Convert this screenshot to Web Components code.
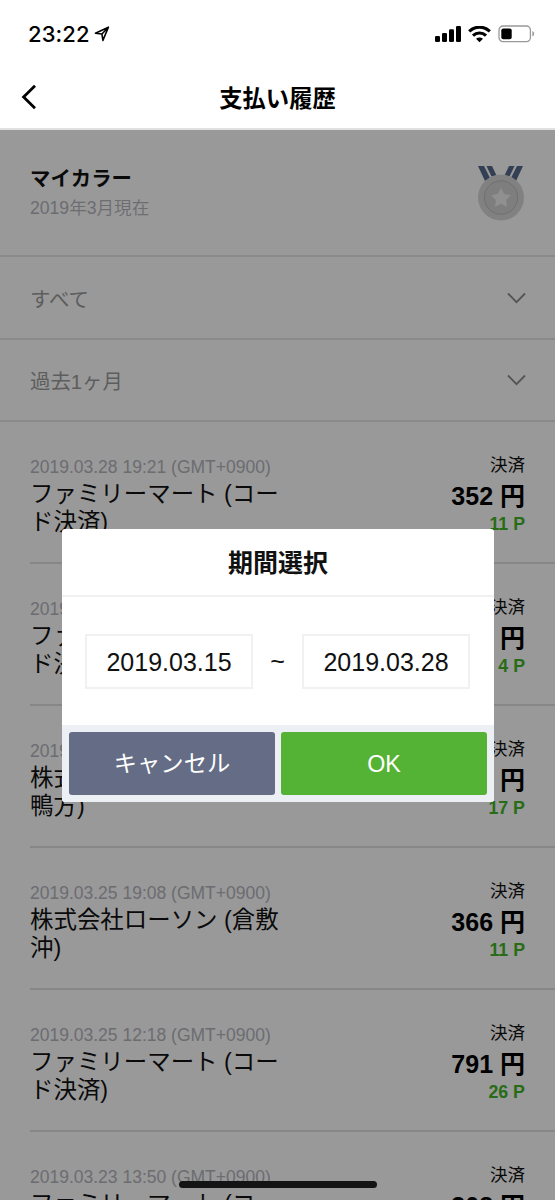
<!DOCTYPE html>
<html lang="ja">
<head>
<meta charset="utf-8">
<title>支払い履歴</title>
<style>
  body {
    margin: 0;
    background: #fff;
    font-family: "Liberation Sans", "Noto Sans CJK JP", sans-serif;
    color: #111;
  }
</style>
</head>
<body>
<history-app></history-app>

<script>
// Attaches an open shadow root and fills it with the markup of getTemplate()
class BaseElement extends HTMLElement {
  constructor() {
    super();
    this.attachShadow({ mode: 'open' });
  }

  connectedCallback() {
    const template = document.createElement('template');
    template.innerHTML = this.getTemplate();
    this.shadowRoot.replaceChildren(template.content.cloneNode(true));
  }
}

class StatusBar extends BaseElement {
  getTemplate() {
    return `
    <style>
      :host { display: flex; align-items: center; height: 68px; padding: 0 20px 0 28px; box-sizing: border-box; color: #000; }
      .time { font: 500 22px/28px Inter, "Liberation Sans", sans-serif; letter-spacing: 0.1px; }
      .location { margin: 0 auto 0 4px; }
      .battery { margin-left: 7px; }
      .wifi { margin-left: 7px; }
      svg { display: block; }
    </style>
    <span class="time">23:22</span>
    <svg class="location" width="16" height="16" viewBox="0 0 16 16">
      <path d="M14.4 1.2 8.9 14.4 7.9 8 1.4 7.2Z M14.4 1.2 7.9 8" fill="none" stroke="#000" stroke-width="1.6" stroke-linejoin="round"/>
    </svg>
    <svg width="26" height="17" viewBox="0 0 26 17">
      <rect x="0" y="10" width="5" height="6" rx="1.3"/>
      <rect x="7" y="7" width="5" height="9" rx="1.3"/>
      <rect x="14" y="3.2" width="5" height="12.8" rx="1.3"/>
      <rect x="21" y="0" width="5" height="16" rx="1.3"/>
    </svg>
    <svg class="wifi" width="23" height="17" viewBox="0 0 23 17">
      <g fill="none" stroke="#000" stroke-width="3.1">
        <path d="M1.2 5.4a14.6 14.6 0 0 1 20.6 0"/>
        <path d="M5 9.7a9.3 9.3 0 0 1 13 0"/>
      </g>
      <path d="M8 12.7q3.5-2.5 7 0l-3.5 3.5z"/>
    </svg>
    <svg class="battery" width="37" height="18" viewBox="0 0 37 18">
      <rect x="1" y="1" width="31.4" height="15.6" rx="4" fill="none" stroke="#999" stroke-width="1.3"/>
      <rect x="3.3" y="3.4" width="10.4" height="10.8" rx="2"/>
      <path d="M34.4 6v5.6q1.8-.8 1.8-2.8t-1.8-2.8z" fill="#999"/>
    </svg>
    `;
  }
}

class NavBar extends BaseElement {
  getTemplate() {
    return `
    <style>
      :host { display: flex; align-items: center; height: 62px; box-sizing: border-box; padding: 0 20px 2px; border-bottom: 2px solid #e1e1e1; }
      svg { display: block; width: 20px; height: 26px; }
      h1 { flex: 1; margin: 3px 20px 0 0; text-align: center; font-size: 23.3px; line-height: 30px; font-weight: 700; color: #000; }
    </style>
    <svg viewBox="0 0 20 26"><path d="M15 1.8 3.6 13 15 24.2" fill="none" stroke="#000" stroke-width="2.8"/></svg>
    <h1><slot></slot></h1>
    `;
  }
}

class MyColor extends BaseElement {
  getTemplate() {
    return `
    <style>
      :host { display: flex; justify-content: space-between; height: 127px; padding: 35px 30px 0; box-sizing: border-box; border-bottom: 2px solid #e6e6ea; }
      h2 { margin: 0; font-size: 20.4px; line-height: 28px; font-weight: 700; color: #111; }
      p { margin: 0; font-size: 17.6px; line-height: 30px; font-weight: 350; color: #b4b5bd; }
      svg { display: block; }
    </style>
    <div>
      <h2><slot></slot></h2>
      <p><slot name="date"></slot></p>
    </div>
    <svg width="48" height="56" viewBox="0 0 48 56">
      <g fill="#566a8c">
        <path d="M1 1h6l6 12-5 3z"/>
        <path d="M9.5 1H15l4.5 9.5-5 1z"/>
        <path d="M46 1h-6l-6 12 5 3z"/>
        <path d="M37.5 1H32l-4.5 9.5 5 1z"/>
      </g>
      <circle cx="24" cy="32.5" r="23" fill="#d8d8d8"/>
      <circle cx="24" cy="32.5" r="16.7" fill="#d3d3d3" stroke="#b9b9b9" stroke-width="1"/>
      <path d="m24 23 3.1 6.1 6.8 1.1-4.9 4.8 1.1 6.9-6.1-3.2-6.1 3.2 1.1-6.9-4.9-4.8 6.8-1.1z" fill="#f0f0f0"/>
    </svg>
    `;
  }
}

class FilterSelect extends BaseElement {
  getTemplate() {
    return `
    <style>
      :host { display: flex; align-items: center; justify-content: space-between; height: 82.5px; padding: 1px 29px 0 30px; box-sizing: border-box; border-bottom: 2px solid #e6e6ea; font-size: 20.4px; color: #9c9c9c; }
      svg { display: block; }
    </style>
    <span><slot></slot></span>
    <svg width="19" height="12" viewBox="0 0 19 12"><path d="m1 1.5 8.5 8.7L18 1.5" fill="none" stroke="#8c8c8c" stroke-width="1.8"/></svg>
    `;
  }
}

class PaymentItem extends BaseElement {
  getTemplate() {
    return `
    <style>
      :host { display: flex; justify-content: space-between; height: 142px; margin-left: 30px; padding: 32px 30px 0 0; box-sizing: border-box; border-bottom: 2px solid #e1e1e5; white-space: nowrap; }
      .date { margin-top: 1px; font-size: 17.5px; line-height: 24px; color: #b4b5bd; }
      .name { margin-top: 1px; font-size: 23.45px; line-height: 28px; white-space: pre-line; }
      .right { display: flex; flex-direction: column; align-items: flex-end; margin-top: -1px; }
      .kind { font-size: 17.5px; line-height: 24px; }
      .amount { margin-top: 3px; font-size: 25px; line-height: 32px; font-weight: 700; color: #000; }
      .points { margin-top: 1px; font-size: 17.8px; line-height: 23px; font-weight: 700; color: #45b527; }
    </style>
    <div>
      <div class="date">${this.getAttribute('date')}</div>
      <div class="name"><slot></slot></div>
    </div>
    <div class="right">
      <div class="kind">決済</div>
      <div class="amount">${this.getAttribute('amount')}</div>
      <div class="points">${this.getAttribute('points')}</div>
    </div>
    `;
  }
}

class DateField extends BaseElement {
  getTemplate() {
    return `
    <style>
      :host { display: flex; align-items: center; justify-content: center; width: 168px; height: 55px; padding-top: 2px; box-sizing: border-box; border: 2px solid #f1f1f1; font-size: 25px; color: #111; }
    </style>
    <slot></slot>
    `;
  }
}

class DialogButton extends BaseElement {
  getTemplate() {
    return `
    <style>
      :host { display: flex; flex: 1; align-items: center; justify-content: center; border-radius: 3px; background: #656c85; color: #fff; font-size: 23.3px; line-height: 30px; }
      :host([primary]) { background: #54b235; }
    </style>
    <slot></slot>
    `;
  }
}

class PeriodDialog extends BaseElement {
  getTemplate() {
    return `
    <style>
      :host { display: flex; flex-direction: column; width: 432px; height: 273px; border-radius: 3px; overflow: hidden; background: #fff; }
      h2 { margin: 0; height: 68px; box-sizing: border-box; padding-top: 1px; border-bottom: 2px solid #f1f1f2; text-align: center; font-size: 25px; line-height: 66px; font-weight: 700; }
      .range { display: flex; flex: 1; align-items: center; justify-content: space-between; padding: 0 24px 0 23px; font-size: 25px; }
      .buttons { display: flex; gap: 6px; height: 77px; box-sizing: border-box; padding: 7px; background: #eceff4; }
    </style>
    <h2><slot name="title"></slot></h2>
    <div class="range">
      <date-field>${this.getAttribute('from')}</date-field>
      <span>~</span>
      <date-field>${this.getAttribute('to')}</date-field>
    </div>
    <div class="buttons">
      <dialog-button>キャンセル</dialog-button>
      <dialog-button primary>OK</dialog-button>
    </div>
    `;
  }
}

const payments = [
  { date: '2019.03.28 19:21 (GMT+0900)', name: 'ファミリーマート (コー\nド決済)', amount: '352 円', points: '11 P' },
  { date: '2019', name: 'ファ\nド決', amount: '円', points: '4 P' },
  { date: '2019', name: '株式\n鴨方)', amount: '円', points: '17 P' },
  { date: '2019.03.25 19:08 (GMT+0900)', name: '株式会社ローソン (倉敷\n沖)', amount: '366 円', points: '11 P' },
  { date: '2019.03.25 12:18 (GMT+0900)', name: 'ファミリーマート (コー\nド決済)', amount: '791 円', points: '26 P' },
  { date: '2019.03.23 13:50 (GMT+0900)', name: 'ファミリーマート (コー', amount: '308 円', points: '' }
];

class HistoryApp extends BaseElement {
  getTemplate() {
    return `
    <style>
      :host { display: block; position: relative; width: 555px; height: 1200px; overflow: hidden; background: #fff; }
      .backdrop { position: absolute; inset: 130px 0 0; background: rgba(0, 0, 0, 0.4); }
      period-dialog { position: absolute; left: 62px; top: 529px; }
      .home { position: absolute; left: 179px; bottom: 12px; width: 198px; height: 7px; border-radius: 4px; background: #141414; }
    </style>
    <status-bar></status-bar>
    <nav-bar>支払い履歴</nav-bar>
    <my-color>マイカラー<span slot="date">2019年3月現在</span></my-color>
    <filter-select>すべて</filter-select>
    <filter-select>過去1ヶ月</filter-select>
    ${payments.map(p => `<payment-item date="${p.date}" amount="${p.amount}" points="${p.points}">${p.name}</payment-item>`).join('')}
    <div class="backdrop"></div>
    <period-dialog from="2019.03.15" to="2019.03.28"><span slot="title">期間選択</span></period-dialog>
    <div class="home"></div>
    `;
  }
}

customElements.define('status-bar', StatusBar);
customElements.define('nav-bar', NavBar);
customElements.define('my-color', MyColor);
customElements.define('filter-select', FilterSelect);
customElements.define('payment-item', PaymentItem);
customElements.define('date-field', DateField);
customElements.define('dialog-button', DialogButton);
customElements.define('period-dialog', PeriodDialog);
customElements.define('history-app', HistoryApp);
</script>
</body>
</html>
